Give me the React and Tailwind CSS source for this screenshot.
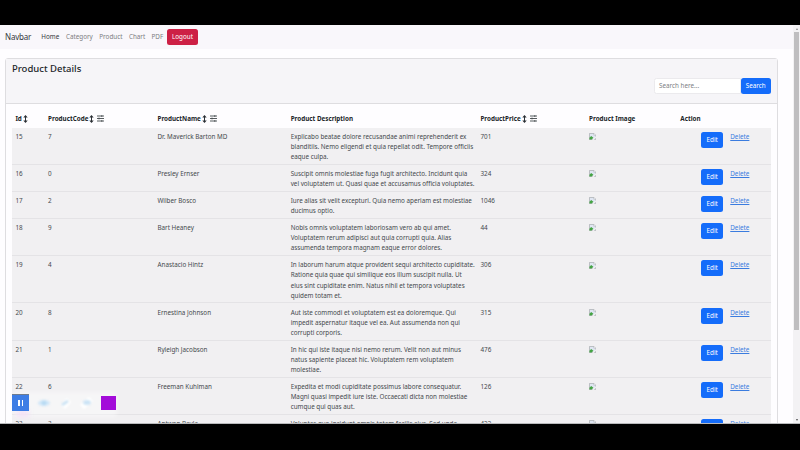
const rows = [
  { id: 15, code: 7, name: 'Dr. Maverick Barton MD', price: 701, lines: ['Explicabo beatae dolore recusandae animi reprehenderit ex', 'blanditiis. Nemo eligendi et quia repellat odit. Tempore officiis', 'eaque culpa.'] },
  { id: 16, code: 0, name: 'Presley Ernser', price: 324, lines: ['Suscipit omnis molestiae fuga fugit architecto. Incidunt quia', 'vel voluptatem ut. Quasi quae et accusamus officia voluptates.'] },
  { id: 17, code: 2, name: 'Wilber Bosco', price: 1046, lines: ['Iure alias sit velit excepturi. Quia nemo aperiam est molestiae', 'ducimus optio.'] },
  { id: 18, code: 9, name: 'Bart Heaney', price: 44, lines: ['Nobis omnis voluptatem laboriosam vero ab qui amet.', 'Voluptatem rerum adipisci aut quia corrupti quia. Alias', 'assumenda tempora magnam eaque error dolores.'] },
  { id: 19, code: 4, name: 'Anastacio Hintz', price: 306, lines: ['In laborum harum atque provident sequi architecto cupiditate.', 'Ratione quia quae qui similique eos illum suscipit nulla. Ut', 'eius sint cupiditate enim. Natus nihil et tempora voluptates', 'quidem totam et.'] },
  { id: 20, code: 8, name: 'Ernestina Johnson', price: 315, lines: ['Aut iste commodi et voluptatem est ea doloremque. Qui', 'impedit aspernatur itaque vel ea. Aut assumenda non qui', 'corrupti corporis.'] },
  { id: 21, code: 1, name: 'Ryleigh Jacobson', price: 476, lines: ['In hic qui iste itaque nisi nemo rerum. Velit non aut minus', 'natus sapiente placeat hic. Voluptatem rem voluptatem', 'molestiae.'] },
  { id: 22, code: 6, name: 'Freeman Kuhlman', price: 126, lines: ['Expedita et modi cupiditate possimus labore consequatur.', 'Magni quasi impedit iure iste. Occaecati dicta non molestiae', 'cumque qui quas aut.'] },
  { id: 23, code: 3, name: 'Antwon Bayla', price: 422, lines: ['Voluptas quo incidunt omnis totam facilis eius. Sed unde'] },
];

const GRID = 'grid grid-cols-[32.7px_109.4px_133.2px_189.8px_108.6px_91.3px_1fr]';

function SortIcon() {
  return (
    <svg className="h-[8px] w-[5px] shrink-0" viewBox="0 0 5 8" fill="#2b3035">
      <path d="M2.5 0 4.7 2.4H3v3.2h1.7L2.5 8 .3 5.6H2V2.4H.3z" />
    </svg>
  );
}

function FilterIcon() {
  return (
    <svg className="ml-[3px] h-[7px] w-[7px] shrink-0" viewBox="0 0 7 7" fill="none" stroke="#44494d" strokeWidth="0.9">
      <path d="M0 1h7M0 3.5h7M0 6h7M4.8.2v1.7M2 2.6v1.8M4.8 5.1v1.7" />
    </svg>
  );
}

function Head({ children, sort, filter }) {
  return (
    <div className="flex items-center pl-[3.4px] whitespace-nowrap">
      <span>{children}</span>
      {sort && <span className="ml-[1px] flex"><SortIcon /></span>}
      {filter && <FilterIcon />}
    </div>
  );
}

function BrokenImage() {
  return (
    <svg className="mt-[1.2px] h-[7px] w-[7px]" viewBox="0 0 16 16">
      <path d="M1 1h10l4 4v10H1z" fill="#dfe6f2" stroke="#a4a7ab" strokeWidth="1.6" />
      <path d="M11 1v4h4" fill="#fff" stroke="#9a9da1" />
      <path d="M1 15v-4l4-4 5 4-4 4z" fill="#45a344" />
      <path d="M7 16 16 7v4l-5 5z" fill="#f1f0f2" />
    </svg>
  );
}

function Row({ row }) {
  return (
    <div className={`${GRID} border-b border-[#e4e3e6] bg-[#f1f0f2] pt-[4.2px] pb-[1.83px] leading-[10.05px] whitespace-nowrap text-[#45494d]`}>
      <div className="pl-[3.4px]">{row.id}</div>
      <div className="pl-[3.4px]">{row.code}</div>
      <div className="pl-[3.4px]">{row.name}</div>
      <div className="pl-[3.4px] tracking-[-0.01px]">
        {row.lines.map((line) => <div key={line}>{line}</div>)}
      </div>
      <div className="pl-[3.4px]">{row.price}</div>
      <div className="pl-[3.4px]"><BrokenImage /></div>
      <div className="flex h-[10px] items-start pl-[24.3px]">
        <button className="h-[16px] w-[22px] shrink-0 rounded-[2.5px] bg-[#146cfa] text-white">Edit</button>
        <a className="ml-[7px] text-[#3b7cdf] underline decoration-[0.6px] underline-offset-1">Delete</a>
      </div>
    </div>
  );
}

function Recorder() {
  return (
    <div className="absolute top-[392px] left-[12px] flex h-[30px] w-[108px] items-start">
      <div className="absolute top-0 left-0 h-[25px] w-[105px] rounded bg-white/40 blur-[2px]" />
      <div className="absolute top-[18px] left-[4px] h-[7px] w-[13px] bg-[#f5dff6]/80 blur-[2px]" />
      <div className="relative mt-[2px] flex h-[17px] w-[17px] items-center justify-center gap-[2px] border-t border-[#6f7c8d] bg-[#3d7de5]">
        <i className="h-[6px] w-[1.5px] bg-white" />
        <i className="h-[6px] w-[1.5px] bg-white" />
      </div>
      <svg className="relative h-[22px] w-[74px] blur-[1px]" viewBox="0 0 74 22">
        <ellipse cx="15" cy="11" rx="6" ry="3" fill="#cfe6f8" />
        <circle cx="15" cy="11" r="2.4" fill="#b8daf3" />
        <path d="m34 15 6-7" stroke="#fff" strokeWidth="6" />
        <path d="m33 13 6-4" stroke="#c3def2" strokeWidth="2.5" />
        <path d="m53 15 9-8" stroke="#fff" strokeWidth="6" />
        <ellipse cx="58" cy="10.5" rx="4" ry="2.5" fill="#cbe3f5" />
      </svg>
      <div className="relative mt-[3.5px] -ml-[2px] h-[14.5px] w-[14.5px] bg-[#a30cd9]" />
    </div>
  );
}

export default function App() {
  return (
    <div className="flex h-[450px] w-[800px] flex-col overflow-hidden bg-black pt-[25px] font-['Noto_Sans','Open_Sans',sans-serif] text-[6.3px] text-[#212529]">
      <div className="flex h-[399px] overflow-hidden border-b border-[#b9babc] bg-[#fefdff]">
        <div className="min-w-0 flex-1">
          <nav className="flex h-[23.5px] items-center bg-[#f9f7fb] pl-[5px] whitespace-nowrap">
            <span className="w-[36.3px] text-[8px] tracking-[-0.2px] text-[#34383c]">Navbar</span>
            <span className="w-[24.7px] text-[#34383c]">Home</span>
            <span className="w-[33.3px] text-[#7c7d81]">Category</span>
            <span className="w-[29.7px] text-[#7c7d81]">Product</span>
            <span className="w-[22.6px] text-[#7c7d81]">Chart</span>
            <span className="w-[15.2px] text-[#7c7d81]">PDF</span>
            <button className="h-[16px] w-[31.5px] rounded-[2.5px] bg-[#cd2045] text-white">Logout</button>
          </nav>
          <section className="mt-[9.5px] ml-[5px] h-[420px] w-[773px] rounded-[3px] border border-[#dedde0]">
            <header className="flex h-[45px] flex-col border-b border-[#dedde0] bg-[#f6f5f8] pr-[6px] pl-[6px]">
              <h1 className="h-[18.5px] pt-[3px] text-[9.5px] leading-[14px] font-medium">Product Details</h1>
              <div className="flex justify-end">
                <div className="flex h-[16px] w-[87px] items-center rounded-l-[2.5px] border border-[#ebeaed] bg-white pl-[4.5px] text-[#7d8084]">Search here...</div>
                <button className="h-[16px] w-[30.5px] rounded-[2.5px] bg-[#146cfa] text-white">Search</button>
              </div>
            </header>
            <div className="mt-[6px] mr-[6px] ml-[6px]">
              <div className={`${GRID} h-[17.7px] items-center font-bold`}>
                <Head sort>Id</Head>
                <Head sort filter>ProductCode</Head>
                <Head sort filter>ProductName</Head>
                <Head>Product Description</Head>
                <Head sort filter>ProductPrice</Head>
                <Head>Product Image</Head>
                <Head>Action</Head>
              </div>
              {rows.map((row) => <Row key={row.id} row={row} />)}
            </div>
          </section>
        </div>
        <div className="flex w-[7px] flex-col items-center justify-between bg-[#f3f2f4] py-[2.5px]">
          <i className="border-x-[1.5px] border-b-2 border-x-transparent border-b-[#8b8b8d]" />
          <div className="mt-[2.5px] mb-auto h-[298px] w-[5px] bg-[#bfbec0]" />
          <i className="border-x-[1.5px] border-t-2 border-x-transparent border-t-[#505052]" />
        </div>
      </div>
      <Recorder />
    </div>
  );
}
